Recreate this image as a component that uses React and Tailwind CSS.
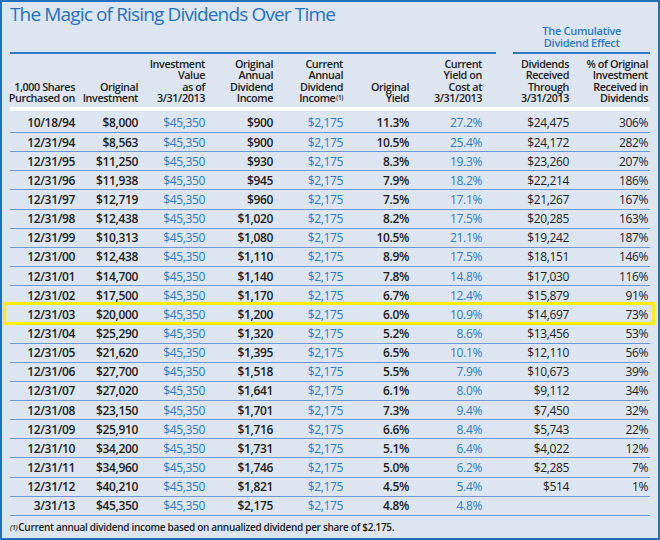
import React from "react";

const rows = [
  ["10/18/94", "$8,000", "$45,350", "$900", "$2,175", "11.3%", "27.2%", "$24,475", "306%"],
  ["12/31/94", "$8,563", "$45,350", "$900", "$2,175", "10.5%", "25.4%", "$24,172", "282%"],
  ["12/31/95", "$11,250", "$45,350", "$930", "$2,175", "8.3%", "19.3%", "$23,260", "207%"],
  ["12/31/96", "$11,938", "$45,350", "$945", "$2,175", "7.9%", "18.2%", "$22,214", "186%"],
  ["12/31/97", "$12,719", "$45,350", "$960", "$2,175", "7.5%", "17.1%", "$21,267", "167%"],
  ["12/31/98", "$12,438", "$45,350", "$1,020", "$2,175", "8.2%", "17.5%", "$20,285", "163%"],
  ["12/31/99", "$10,313", "$45,350", "$1,080", "$2,175", "10.5%", "21.1%", "$19,242", "187%"],
  ["12/31/00", "$12,438", "$45,350", "$1,110", "$2,175", "8.9%", "17.5%", "$18,151", "146%"],
  ["12/31/01", "$14,700", "$45,350", "$1,140", "$2,175", "7.8%", "14.8%", "$17,030", "116%"],
  ["12/31/02", "$17,500", "$45,350", "$1,170", "$2,175", "6.7%", "12.4%", "$15,879", "91%"],
  ["12/31/03", "$20,000", "$45,350", "$1,200", "$2,175", "6.0%", "10.9%", "$14,697", "73%"],
  ["12/31/04", "$25,290", "$45,350", "$1,320", "$2,175", "5.2%", "8.6%", "$13,456", "53%"],
  ["12/31/05", "$21,620", "$45,350", "$1,395", "$2,175", "6.5%", "10.1%", "$12,110", "56%"],
  ["12/31/06", "$27,700", "$45,350", "$1,518", "$2,175", "5.5%", "7.9%", "$10,673", "39%"],
  ["12/31/07", "$27,020", "$45,350", "$1,641", "$2,175", "6.1%", "8.0%", "$9,112", "34%"],
  ["12/31/08", "$23,150", "$45,350", "$1,701", "$2,175", "7.3%", "9.4%", "$7,450", "32%"],
  ["12/31/09", "$25,910", "$45,350", "$1,716", "$2,175", "6.6%", "8.4%", "$5,743", "22%"],
  ["12/31/10", "$34,200", "$45,350", "$1,731", "$2,175", "5.1%", "6.4%", "$4,022", "12%"],
  ["12/31/11", "$34,960", "$45,350", "$1,746", "$2,175", "5.0%", "6.2%", "$2,285", "7%"],
  ["12/31/12", "$40,210", "$45,350", "$1,821", "$2,175", "4.5%", "5.4%", "$514", "1%"],
  ["3/31/13", "$45,350", "$45,350", "$2,175", "$2,175", "4.8%", "4.8%", "", ""],
];

// per column text style: dark semibold, blue regular, dark regular
const cellStyle = [
  "text-[#1c1c1c] font-semibold",
  "text-[#1c1c1c] font-semibold",
  "text-[#2a7bcb]",
  "text-[#1c1c1c] font-semibold",
  "text-[#2a7bcb]",
  "text-[#1c1c1c] font-semibold",
  "text-[#2a7bcb]",
  "text-[#1c1c1c]",
  "text-[#1c1c1c] pr-1",
];

const gridCols = "grid grid-cols-[65px_63px_67px_68px_70px_66px_73px_87px_83px]";

const Header = ({ lines, sup, last }) => (
  <div className={`flex flex-col items-end justify-end text-right ${last ? "pr-1" : ""}`}>
    {lines.map((l, i) => (
      <span key={i} className="block whitespace-nowrap">
        {l}
        {sup && i === lines.length - 1 && (
          <sup className="text-[6.5px] ml-[1px] relative -top-[2px]">(1)</sup>
        )}
      </span>
    ))}
  </div>
);

export default function App() {
  return (
    <div
      className="w-[660px] h-[540px] bg-[#dde5f1] border-2 border-[#2470b8] overflow-hidden flex flex-col"
      style={{ fontFamily: '"Open Sans", "Liberation Sans", Arial, sans-serif' }}
    >
      <div className="pl-2 pt-[1px] h-[23px] text-[19px] leading-[22px] text-[#1f72c4] tracking-[-0.85px] whitespace-nowrap">
        The Magic of Rising Dividends Over Time
      </div>

      <div className="flex px-2 gap-[17px]">
        <div className="w-[488px] border-b-2 border-[#2a78c6]" />
        <div className="w-[137px] border-b-2 border-[#2a78c6] text-center text-[11px] leading-[12px] font-semibold text-[#2a7bcb] pb-[3px] tracking-[-0.3px]">
          <div>The Cumulative</div>
          <div>Dividend Effect</div>
        </div>
      </div>

      <div className={`${gridCols} px-2 pt-[3px] h-[50px] text-[10.8px] leading-[11.6px] text-[#1c1c1c] font-semibold tracking-[-0.4px]`}>
        <Header lines={["1,000 Shares", "Purchased on"]} />
        <Header lines={["Original", "Investment"]} />
        <Header lines={["Investment", "Value", "as of", "3/31/2013"]} />
        <Header lines={["Original", "Annual", "Dividend", "Income"]} />
        <Header lines={["Current", "Annual", "Dividend", "Income"]} sup />
        <Header lines={["Original", "Yield"]} />
        <Header lines={["Current", "Yield on", "Cost at", "3/31/2013"]} />
        <Header lines={["Dividends", "Received", "Through", "3/31/2013"]} />
        <Header lines={["% of Original", "Investment", "Received in", "Dividends"]} last />
      </div>

      <div className="mx-2 mt-[3px] h-[4px] bg-white" />

      <div className="flex flex-col px-2 text-[12px] tracking-[-0.35px]">
        {rows.map((r, i) => {
          const hl = r[0] === "12/31/03";
          return (
            <div
              key={i}
              className={`relative ${gridCols} items-center border-b-[1.5px] border-[#6b97d6] ${
                i === 0 ? "h-[22px] pt-[1px]" : "h-[19.15px]"
              }`}
            >
              {r.map((c, j) => (
                <div key={j} className={`text-right whitespace-nowrap leading-[15px] ${cellStyle[j]}`}>
                  {c}
                </div>
              ))}
              {hl && (
                <div className="absolute -left-[7px] -right-[5px] -top-[3px] -bottom-[2px] border-[3px] border-[#ffee00] pointer-events-none" />
              )}
            </div>
          );
        })}
      </div>

      <div className="pl-2 pt-[5px] text-[10px] leading-[13px] font-semibold text-[#1c1c1c] tracking-[-0.3px] whitespace-nowrap">
        <sup className="italic text-[7px] relative -top-[1px] mr-[1px]">(1)</sup>
        Current annual dividend income based on annualized dividend per share of $2.175.
      </div>
    </div>
  );
}
